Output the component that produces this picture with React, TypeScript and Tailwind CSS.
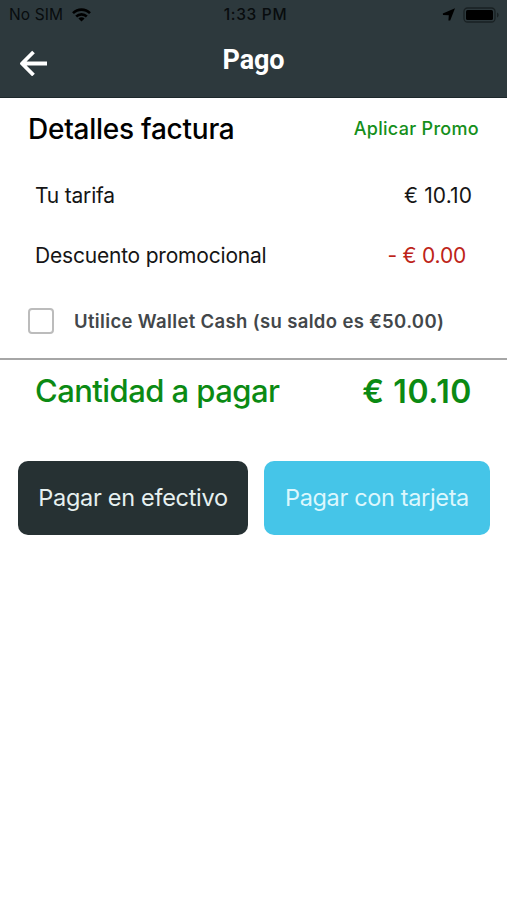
import { useState } from "react";

const StatusBar = () => (
  <div className="flex h-[29px] items-center justify-between pl-[9px] pr-[7px] text-[#080c0e]">
    <div className="flex w-[120px] items-center gap-[9px]">
      <span className="text-[15.5px] leading-none tracking-[0.1px]">No SIM</span>
      <svg width="19" height="14" viewBox="0 0 19 14" fill="none" stroke="black" strokeWidth="2.6">
        <path d="M1 5.2C5.8 0.4 13.2 0.4 18 5.2" />
        <path d="M4.2 8.5C7.2 5.6 11.8 5.6 14.8 8.5" />
        <path d="M9.5 13.6L6.4 10.5C8.2 8.9 10.8 8.9 12.6 10.5Z" fill="black" stroke="none" />
      </svg>
    </div>
    <span className="pl-[2px] text-[15.5px] font-medium leading-none tracking-[0.7px]">1:33 PM</span>
    <div className="flex w-[120px] items-center justify-end gap-[8px]">
      <svg width="13" height="13" viewBox="0 0 13 13" fill="black">
        <path d="M13 0.2L8.2 12.6L6.4 12.6L6.8 7.3L1 7L0.8 5.4Z" />
      </svg>
      <svg width="37" height="16" viewBox="0 0 37 16">
        <rect x="1" y="1" width="31" height="14" rx="3.5" fill="none" stroke="#192123" strokeWidth="1.3" />
        <rect x="3" y="3" width="27" height="10" rx="1.5" fill="black" />
        <path d="M34 5.5C36.2 6.3 36.2 9.7 34 10.5Z" fill="#192123" />
      </svg>
    </div>
  </div>
);

export default function App() {
  const [useWallet, setUseWallet] = useState(false);

  return (
    <div className="h-[900px] w-full bg-white font-['Inter',sans-serif] text-[#151515] whitespace-nowrap">
      <header className="h-[98px] border-b border-[#1d282b] bg-[#2d393d]">
        <StatusBar />
        <div className="grid h-[67px] grid-cols-3 items-center pl-[19px] pr-[19px]">
          <button aria-label="Atrás">
            <svg width="29" height="26" viewBox="0 0 29 26" fill="none" stroke="white" strokeWidth="3.8" strokeLinejoin="round">
              <path d="M28 13.5H3M14.5 2L3 13.5L14.5 25" />
            </svg>
          </button>
          <h1 className="pb-[4px] text-center font-['Roboto',sans-serif] text-[27px] font-bold leading-none tracking-[-0.1px] text-white">
            Pago
          </h1>
        </div>
      </header>

      <main>
        <div className="flex h-[62px] items-center justify-between pl-[28px] pr-[28px]">
          <h2 className="text-[28px] font-medium tracking-[-0.25px] text-black">Detalles factura</h2>
          <button className="pb-[1px] text-[18px] font-medium tracking-[0.3px] text-[#158f1b]">Aplicar Promo</button>
        </div>

        <div className="mt-[6px] flex h-[60px] items-center justify-between pl-[35px] pr-[35px] text-[21px]">
          <span className="tracking-[-0.2px]">Tu tarifa</span>
          <span className="tracking-[0.1px]">€ 10.10</span>
        </div>
        <div className="flex h-[60px] items-center justify-between pl-[35px] pr-[41px] text-[21px]">
          <span className="tracking-[-0.2px]">Descuento promocional</span>
          <span className="tracking-[-0.2px] text-[#bd2318]">- € 0.00</span>
        </div>

        <label className="flex h-[74px] items-center gap-[20px] border-b-2 border-[#a6a6a6] pl-[28px] pb-[2px]">
          <input
            type="checkbox"
            checked={useWallet}
            onChange={(e) => setUseWallet(e.target.checked)}
            className="size-[26px] appearance-none rounded-[4px] border-2 border-[#bcbcbc] checked:bg-[#158f1b]"
          />
          <span className="pt-[2px] text-[18.5px] font-semibold tracking-[0.35px] text-[#43474a]">
            Utilice Wallet Cash (su saldo es €50.00)
          </span>
        </label>

        <div className="flex h-[63px] items-center justify-between pl-[35px] pr-[35px] text-[#0b8a13]">
          <span className="text-[31px] font-medium tracking-[-0.55px]">Cantidad a pagar</span>
          <span className="text-[32px] font-semibold tracking-[0.6px]">€ 10.10</span>
        </div>

        <div className="mt-[38px] flex gap-[16px] pl-[18px] pr-[17px] text-[23.5px]">
          <button className="h-[74px] w-[230px] rounded-[10px] bg-[#263133] tracking-[-0.3px] text-[#e6f0f0]">
            Pagar en efectivo
          </button>
          <button className="h-[74px] w-[226px] rounded-[10px] bg-[#45c5e8] tracking-[-0.35px] text-[#dcf7fd]">
            Pagar con tarjeta
          </button>
        </div>
      </main>
    </div>
  );
}
